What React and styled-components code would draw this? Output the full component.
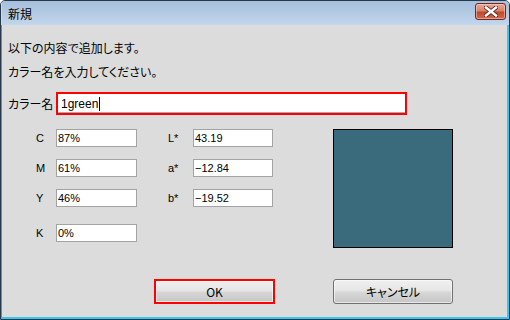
import React from 'react';
import styled, { createGlobalStyle } from 'styled-components';

const GlobalStyle = createGlobalStyle`
  html, body {
    margin: 0;
    padding: 0;
    width: 510px;
    height: 320px;
    overflow: hidden;
    background: #ffffff;
  }
`;

const jp = `"Noto Sans CJK JP", "Liberation Sans", sans-serif`;
const latin = `"Liberation Sans", Arial, sans-serif`;

const Window = styled.div`
  box-sizing: border-box;
  width: 510px;
  height: 320px;
  display: flex;
  flex-direction: column;
  border: 1px solid #26384a;
  border-radius: 5px 5px 0 0;
  overflow: hidden;
  background: #dcdcdc;
`;

const TitleBar = styled.div`
  height: 24px;
  flex: none;
  display: flex;
  align-items: center;
  justify-content: space-between;
  padding: 0 3px 0 6px;
  background: linear-gradient(#a6bfdb, #c2d6ec);
  border-left: 1px solid #c9dcf0;
`;

const Title = styled.span`
  font-family: ${jp};
  font-size: 12px;
  color: #000;
  font-feature-settings: "palt";
`;

const CloseButton = styled.div`
  box-sizing: border-box;
  width: 31px;
  height: 17px;
  margin-top: -4px;
  border: 1px solid #6e2a22;
  border-radius: 3px;
  background: linear-gradient(#e9a796 0%, #d9826b 45%, #c1472b 55%, #d26a4e 100%);
  box-shadow: inset 0 0 0 1px rgba(255, 220, 210, 0.5);
  display: flex;
  align-items: center;
  justify-content: center;
`;

const Body = styled.div`
  flex: 1;
  display: flex;
  flex-direction: column;
  padding: 0 0 0 6px;
  border-left: 1px solid #4d94d6;
  border-right: 2px solid #39c5ef;
  border-bottom: 2px solid #39c5ef;
`;

const Message = styled.div`
  font-family: ${jp};
  font-size: 12px;
  line-height: 16px;
  color: #000;
  font-feature-settings: "palt";
  margin-top: ${(p) => p.$top}px;
`;

const NameRow = styled.div`
  display: flex;
  align-items: center;
  margin-top: 12px;
  height: 23px;
`;

const NameLabel = styled.span`
  width: 48px;
  font-family: ${jp};
  font-size: 12px;
  font-feature-settings: "palt";
  color: #000;
`;

const NameInput = styled.div`
  box-sizing: border-box;
  width: 351px;
  height: 23px;
  border: 2px solid #ff0000;
  background: #fff;
  box-shadow: inset 0 -1px 0 #a9a9b0;
  display: flex;
  align-items: center;
  padding-left: 3px;
  font-family: ${latin};
  font-size: 12px;
  color: #000;
`;

const Caret = styled.span`
  display: inline-block;
  width: 1px;
  height: 14px;
  background: #000;
  margin-left: 1px;
`;

const FieldsArea = styled.div`
  display: flex;
  margin-top: 14px;
  height: 119px;
`;

const FieldGrid = styled.div`
  margin-left: 28px;
  display: grid;
  grid-template-columns: 20px 81px 31px 25px 80px;
  grid-template-rows: 18px 18px 18px 23px;
  row-gap: 12px;
  align-content: start;
`;

const FieldLabel = styled.span`
  align-self: ${(p) => (p.$end ? 'end' : 'center')};
  height: 18px;
  line-height: 18px;
  font-family: ${latin};
  font-size: 11px;
  color: #000;
  grid-column: ${(p) => p.$col};
`;

const FieldInput = styled.div`
  box-sizing: border-box;
  align-self: ${(p) => (p.$end ? 'end' : 'stretch')};
  height: 18px;
  border: 1px solid #a3a3a3;
  background: #fff;
  padding-left: 1px;
  font-family: ${latin};
  font-size: 11px;
  line-height: 16px;
  color: #000;
  grid-column: ${(p) => p.$col};
`;

const Swatch = styled.div`
  box-sizing: border-box;
  margin-left: 60px;
  width: 120px;
  height: 119px;
  border: 1px solid #000;
  background: #396b7d;
`;

const ButtonRow = styled.div`
  display: flex;
  gap: 58px;
  margin-top: 31px;
  padding-left: 146px;
`;

const Button = styled.div`
  box-sizing: border-box;
  width: ${(p) => p.$w}px;
  height: 25px;
  border: ${(p) => (p.$focus ? '2px solid #ff0000' : '1px solid #707070')};
  border-radius: ${(p) => (p.$focus ? '0' : '3px')};
  background: linear-gradient(#f0f0f0 0%, #e6e6e6 45%, #d6d6d6 55%, #c6c6c6 100%);
  box-shadow: inset 0 0 0 1px rgba(255, 255, 255, 0.6);
  display: flex;
  align-items: center;
  justify-content: center;
  font-family: ${jp};
  font-size: 12px;
  font-feature-settings: "palt";
  color: #000;
`;

const cmyk = [
  ['C', '87%'],
  ['M', '61%'],
  ['Y', '46%'],
];
const lab = [
  ['L*', '43.19'],
  ['a*', '\u221212.84'],
  ['b*', '\u221219.52'],
];

export default function App() {
  return (
    <>
      <GlobalStyle />
      <Window>
        <TitleBar>
          <Title>新規</Title>
          <CloseButton>
            <svg width="14" height="11" viewBox="0 0 14 11">
              <path d="M2 1.5 L12 9.5 M12 1.5 L2 9.5" stroke="#5a2a22" strokeWidth="4.2" strokeLinecap="square" />
              <path d="M2 1.5 L12 9.5 M12 1.5 L2 9.5" stroke="#ffffff" strokeWidth="2.4" strokeLinecap="square" />
            </svg>
          </CloseButton>
        </TitleBar>
        <Body>
          <Message $top={15}>以下の内容で追加します。</Message>
          <Message $top={8}>カラー名を入力してください。</Message>
          <NameRow>
            <NameLabel>カラー名</NameLabel>
            <NameInput>
              1green<Caret />
            </NameInput>
          </NameRow>
          <FieldsArea>
            <FieldGrid>
              {cmyk.map(([l, v], i) => (
                <React.Fragment key={l}>
                  <FieldLabel $col={1}>{l}</FieldLabel>
                  <FieldInput $col={2}>{v}</FieldInput>
                  <FieldLabel $col={4}>{lab[i][0]}</FieldLabel>
                  <FieldInput $col={5}>{lab[i][1]}</FieldInput>
                </React.Fragment>
              ))}
              <FieldLabel $col={1} $end>K</FieldLabel>
              <FieldInput $col={2} $end>0%</FieldInput>
            </FieldGrid>
            <Swatch />
          </FieldsArea>
          <ButtonRow>
            <Button $w={121} $focus>OK</Button>
            <Button $w={120}>キャンセル</Button>
          </ButtonRow>
        </Body>
      </Window>
    </>
  );
}
